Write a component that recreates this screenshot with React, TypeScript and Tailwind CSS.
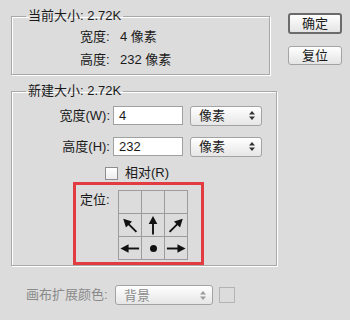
import React from "react";

const Arrow = ({ rotate }: { rotate: number }) => (
  <svg width="23" height="23" viewBox="0 0 23 23">
    <g transform={`rotate(${rotate} 11.5 11.5)`}>
      <line x1="11.5" y1="21" x2="11.5" y2="8" stroke="#111" strokeWidth="2" />
      <polygon points="11.5,1.5 7,10 16,10" fill="#111" />
    </g>
  </svg>
);

const Updown = ({ color = "#333" }: { color?: string }) => (
  <svg width="6" height="9" viewBox="0 0 6 9">
    <polygon points="3,0 6,3.5 0,3.5" fill={color} />
    <polygon points="3,9 6,5.5 0,5.5" fill={color} />
  </svg>
);

const Select = ({ label, w, disabled = false }: { label: string; w: string; disabled?: boolean }) => (
  <div
    className={`${w} h-[20px] flex items-center justify-between pl-[8px] pr-[6px] rounded-[3px] border border-[#a3a3a3] bg-gradient-to-b from-white to-[#e6e6e6] ${
      disabled ? "text-[#8c8c8c]" : "text-[#1a1a1a]"
    }`}
  >
    <span className="leading-none">{label}</span>
    <Updown color={disabled ? "#9a9a9a" : "#333"} />
  </div>
);

const Cell = ({ children }: { children?: React.ReactNode }) => (
  <div className="w-[23px] h-[23px] border-r border-b border-[#9c9c9c] flex items-center justify-center">
    {children}
  </div>
);

export default function App() {
  return (
    <div className="w-[350px] h-[320px] bg-[#dcdcdc] text-[13px] text-[#1a1a1a] font-['Liberation_Sans','Noto_Sans_CJK_SC',sans-serif]">
      <div className="flex pt-[8px] pl-[11px]">
        {/* left column */}
        <div className="w-[259px] flex flex-col">
          <fieldset className="border border-[#a8a8a8] shadow-[inset_1px_1px_0_#fff,1px_1px_0_#fff] px-[14px] pb-[3px]">
            <legend className="px-[2px] leading-[16px]">当前大小: 2.72K</legend>
            <div className="pl-[54px] pt-[1px]">
              <div className="flex h-[23px] items-center">
                <span className="w-[40px]">宽度:</span>
                <span>4 像素</span>
              </div>
              <div className="flex h-[23px] items-center">
                <span className="w-[40px]">高度:</span>
                <span>232 像素</span>
              </div>
            </div>
          </fieldset>

          <fieldset className="mt-[8px] border border-[#a8a8a8] shadow-[inset_1px_1px_0_#fff,1px_1px_0_#fff] px-[14px] pb-[0px]">
            <legend className="px-[2px] leading-[16px]">新建大小: 2.72K</legend>
            <div className="flex items-center mt-[7px] h-[19px]">
              <span className="w-[84px] text-right">宽度(W):</span>
              <div className="ml-[3px] w-[70px] h-[19px] bg-white border border-[#a0a0a0] pl-[5px] flex items-center">4</div>
              <div className="ml-[7px]">
                <Select label="像素" w="w-[72px]" />
              </div>
            </div>
            <div className="flex items-center mt-[12px] h-[19px]">
              <span className="w-[84px] text-right">高度(H):</span>
              <div className="ml-[3px] w-[70px] h-[19px] bg-white border border-[#a0a0a0] pl-[5px] flex items-center">232</div>
              <div className="ml-[7px]">
                <Select label="像素" w="w-[72px]" />
              </div>
            </div>
            <div className="flex items-center mt-[10px] h-[14px] pl-[79px]">
              <div className="w-[13px] h-[13px] border border-[#8e8e8e] bg-gradient-to-b from-white to-[#ececec]" />
              <span className="ml-[7px]">相对(R)</span>
            </div>
            <div className="mt-[2px] ml-[47px] w-[131px] h-[83px] border-[3px] border-[#e23b41] flex pl-[4px] pt-[5px]">
              <span className="w-[38px] leading-[16px] mt-[2px]">定位:</span>
              <div className="grid grid-cols-3 border-l border-t border-[#9c9c9c] h-fit">
                <Cell />
                <Cell />
                <Cell />
                <Cell>
                  <Arrow rotate={-45} />
                </Cell>
                <Cell>
                  <Arrow rotate={0} />
                </Cell>
                <Cell>
                  <Arrow rotate={45} />
                </Cell>
                <Cell>
                  <Arrow rotate={-90} />
                </Cell>
                <Cell>
                  <div className="w-[7px] h-[7px] rounded-full bg-[#111]" />
                </Cell>
                <Cell>
                  <Arrow rotate={90} />
                </Cell>
              </div>
            </div>
          </fieldset>
        </div>

        {/* right column */}
        <div className="ml-[18px] mt-[5px] flex flex-col gap-[12px]">
          <button className="w-[54px] h-[21px] rounded-[3px] border-2 border-[#6b6b6b] bg-gradient-to-b from-white to-[#e4e4e4] leading-none">
            确定
          </button>
          <button className="w-[54px] h-[19px] rounded-[3px] border border-[#a3a3a3] bg-gradient-to-b from-white to-[#e4e4e4] leading-none">
            复位
          </button>
        </div>
      </div>

      {/* bottom row */}
      <div className="flex items-center mt-[19px] pl-[26px] h-[20px] text-[#8a8a8a]">
        <span className="w-[89px]">画布扩展颜色:</span>
        <Select label="背景" w="w-[98px]" disabled />
        <div className="ml-[6px] w-[16px] h-[16px] border border-[#b3b3b3]" />
      </div>
    </div>
  );
}
